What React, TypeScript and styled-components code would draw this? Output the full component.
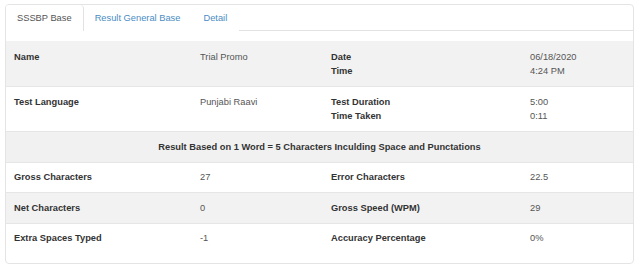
import styled, { createGlobalStyle } from 'styled-components';

const GlobalStyle = createGlobalStyle`
  html, body {
    margin: 0;
    padding: 0;
    background: #ffffff;
  }
  body {
    padding: 4px 6px 0 5px;
    font-family: "Liberation Sans", Arial, sans-serif;
    font-size: 9.3px;
    color: #333;
  }
`;

const Card = styled.div`
  width: 629px;
  box-sizing: border-box;
  border: 1px solid #e4e4e4;
  border-radius: 4px;
  background: #fff;
  overflow: hidden;
  padding-bottom: 10px;
`;

const TabBar = styled.div`
  display: flex;
  height: 25px;
  border-bottom: 1px solid #e2e2e2;
`;

const Tab = styled.div<{ $active?: boolean }>`
  display: flex;
  align-items: center;
  padding: 0 11px;
  margin-bottom: -1px;
  border-right: 1px solid ${p => (p.$active ? '#e2e2e2' : 'transparent')};
  border-top-right-radius: 4px;
  background: #fff;
  color: ${p => (p.$active ? '#555' : '#4a8cc4')};
  height: 26px;
  box-sizing: border-box;
  cursor: pointer;
`;

const Table = styled.div`
  margin-top: 10px;
`;

const Row = styled.div<{ $striped?: boolean }>`
  display: grid;
  grid-template-columns: 186px 131px 199px 1fr;
  background: ${p => (p.$striped ? '#f2f2f2' : '#fff')};
  border-top: 1px solid #e6e6e6;
  &:first-child { border-top-color: #f2f2f2; }
`;

const Cell = styled.div<{ $label?: boolean }>`
  padding: 7.5px 8px;
  line-height: 14.5px;
  font-weight: ${p => (p.$label ? 700 : 400)};
  color: ${p => (p.$label ? '#333' : '#555')};
`;

const HeaderRow = styled.div`
  background: #f1f1f1;
  border-top: 1px solid #e6e6e6;
  padding: 7.5px 8px;
  line-height: 14.5px;
  text-align: center;
  font-weight: 700;
  color: #333;
`;

type Pair = [string, string];

const topRows: { striped: boolean; left: Pair; right: Pair[] }[] = [
  { striped: true, left: ['Name', 'Trial Promo'], right: [['Date', '06/18/2020'], ['Time', '4:24 PM']] },
  { striped: false, left: ['Test Language', 'Punjabi Raavi'], right: [['Test Duration', '5:00'], ['Time Taken', '0:11']] },
];

const resultRows: [string, string, string, string][] = [
  ['Gross Characters', '27', 'Error Characters', '22.5'],
  ['Net Characters', '0', 'Gross Speed (WPM)', '29'],
  ['Extra Spaces Typed', '-1', 'Accuracy Percentage', '0%'],
];

export default function App() {
  return (
    <>
      <GlobalStyle />
      <Card>
        <TabBar>
          <Tab $active>SSSBP Base</Tab>
          <Tab>Result General Base</Tab>
          <Tab>Detail</Tab>
        </TabBar>
        <Table>
          {topRows.map(r => (
            <Row key={r.left[0]} $striped={r.striped}>
              <Cell $label>{r.left[0]}</Cell>
              <Cell>{r.left[1]}</Cell>
              <Cell $label>
                {r.right.map(p => (
                  <div key={p[0]}>{p[0]}</div>
                ))}
              </Cell>
              <Cell>
                {r.right.map(p => (
                  <div key={p[0]}>{p[1]}</div>
                ))}
              </Cell>
            </Row>
          ))}
          <HeaderRow>Result Based on 1 Word = 5 Characters Inculding Space and Punctations</HeaderRow>
          {resultRows.map((r, i) => (
            <Row key={r[0]} $striped={i % 2 === 1}>
              <Cell $label>{r[0]}</Cell>
              <Cell>{r[1]}</Cell>
              <Cell $label>{r[2]}</Cell>
              <Cell>{r[3]}</Cell>
            </Row>
          ))}
        </Table>
      </Card>
    </>
  );
}
